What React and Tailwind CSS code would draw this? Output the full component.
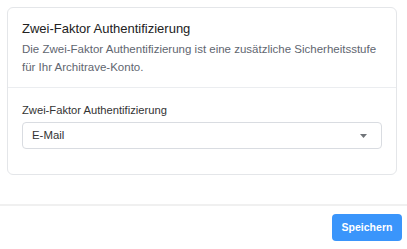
import React from 'react';

const SelectBox = ({ value }) => (
  <div className="flex h-[27px] items-center justify-between rounded-[4px] border border-[#d9dce1] bg-white pl-[9px] pr-[14px]">
    <span className="text-[11.4px] text-[#333]">{value}</span>
    <svg width="7" height="4" viewBox="0 0 7 4" className="mt-[1px]">
      <path d="M0 0 L7 0 L3.5 4 Z" fill="#707479" />
    </svg>
  </div>
);

const App = () => {
  return (
    <div className="h-[249px] w-full overflow-hidden bg-white font-['Liberation_Sans',Arial,sans-serif]">
      <div className="ml-[7px] mr-[10px] pt-[7px]">
        <div className="rounded-[6px] border border-[#e4e6e9]">
          {/* header */}
          <div className="px-[14px] pt-[12px] pb-[11px]">
            <h2 className="text-[13px] leading-[18px] text-[#222]">Zwei-Faktor Authentifizierung</h2>
            <p className="mt-[2px] text-[11.5px] leading-[18px] text-[#5f6670]">
              Die Zwei-Faktor Authentifizierung ist eine zusätzliche Sicherheitsstufe für Ihr Architrave-Konto.
            </p>
          </div>

          <div className="border-t border-[#ebedf0] px-[14px] pt-[14px] pb-[25px]">
            <div className="text-[11.2px] leading-[16px] text-[#333]">Zwei-Faktor Authentifizierung</div>
            <div className="mt-[4px]">
              <SelectBox value="E-Mail" />
            </div>
          </div>
        </div>
      </div>

      {/* footer */}
      <div className="mt-[29px] border-t-2 border-[#f0f0f0] pt-[8px] pr-[5px] flex justify-end">
        <button className="h-[27px] w-[70px] rounded-[4px] bg-[#3a95fb] text-[10.5px] font-semibold text-white">
          Speichern
        </button>
      </div>
    </div>
  );
};

export default App;
